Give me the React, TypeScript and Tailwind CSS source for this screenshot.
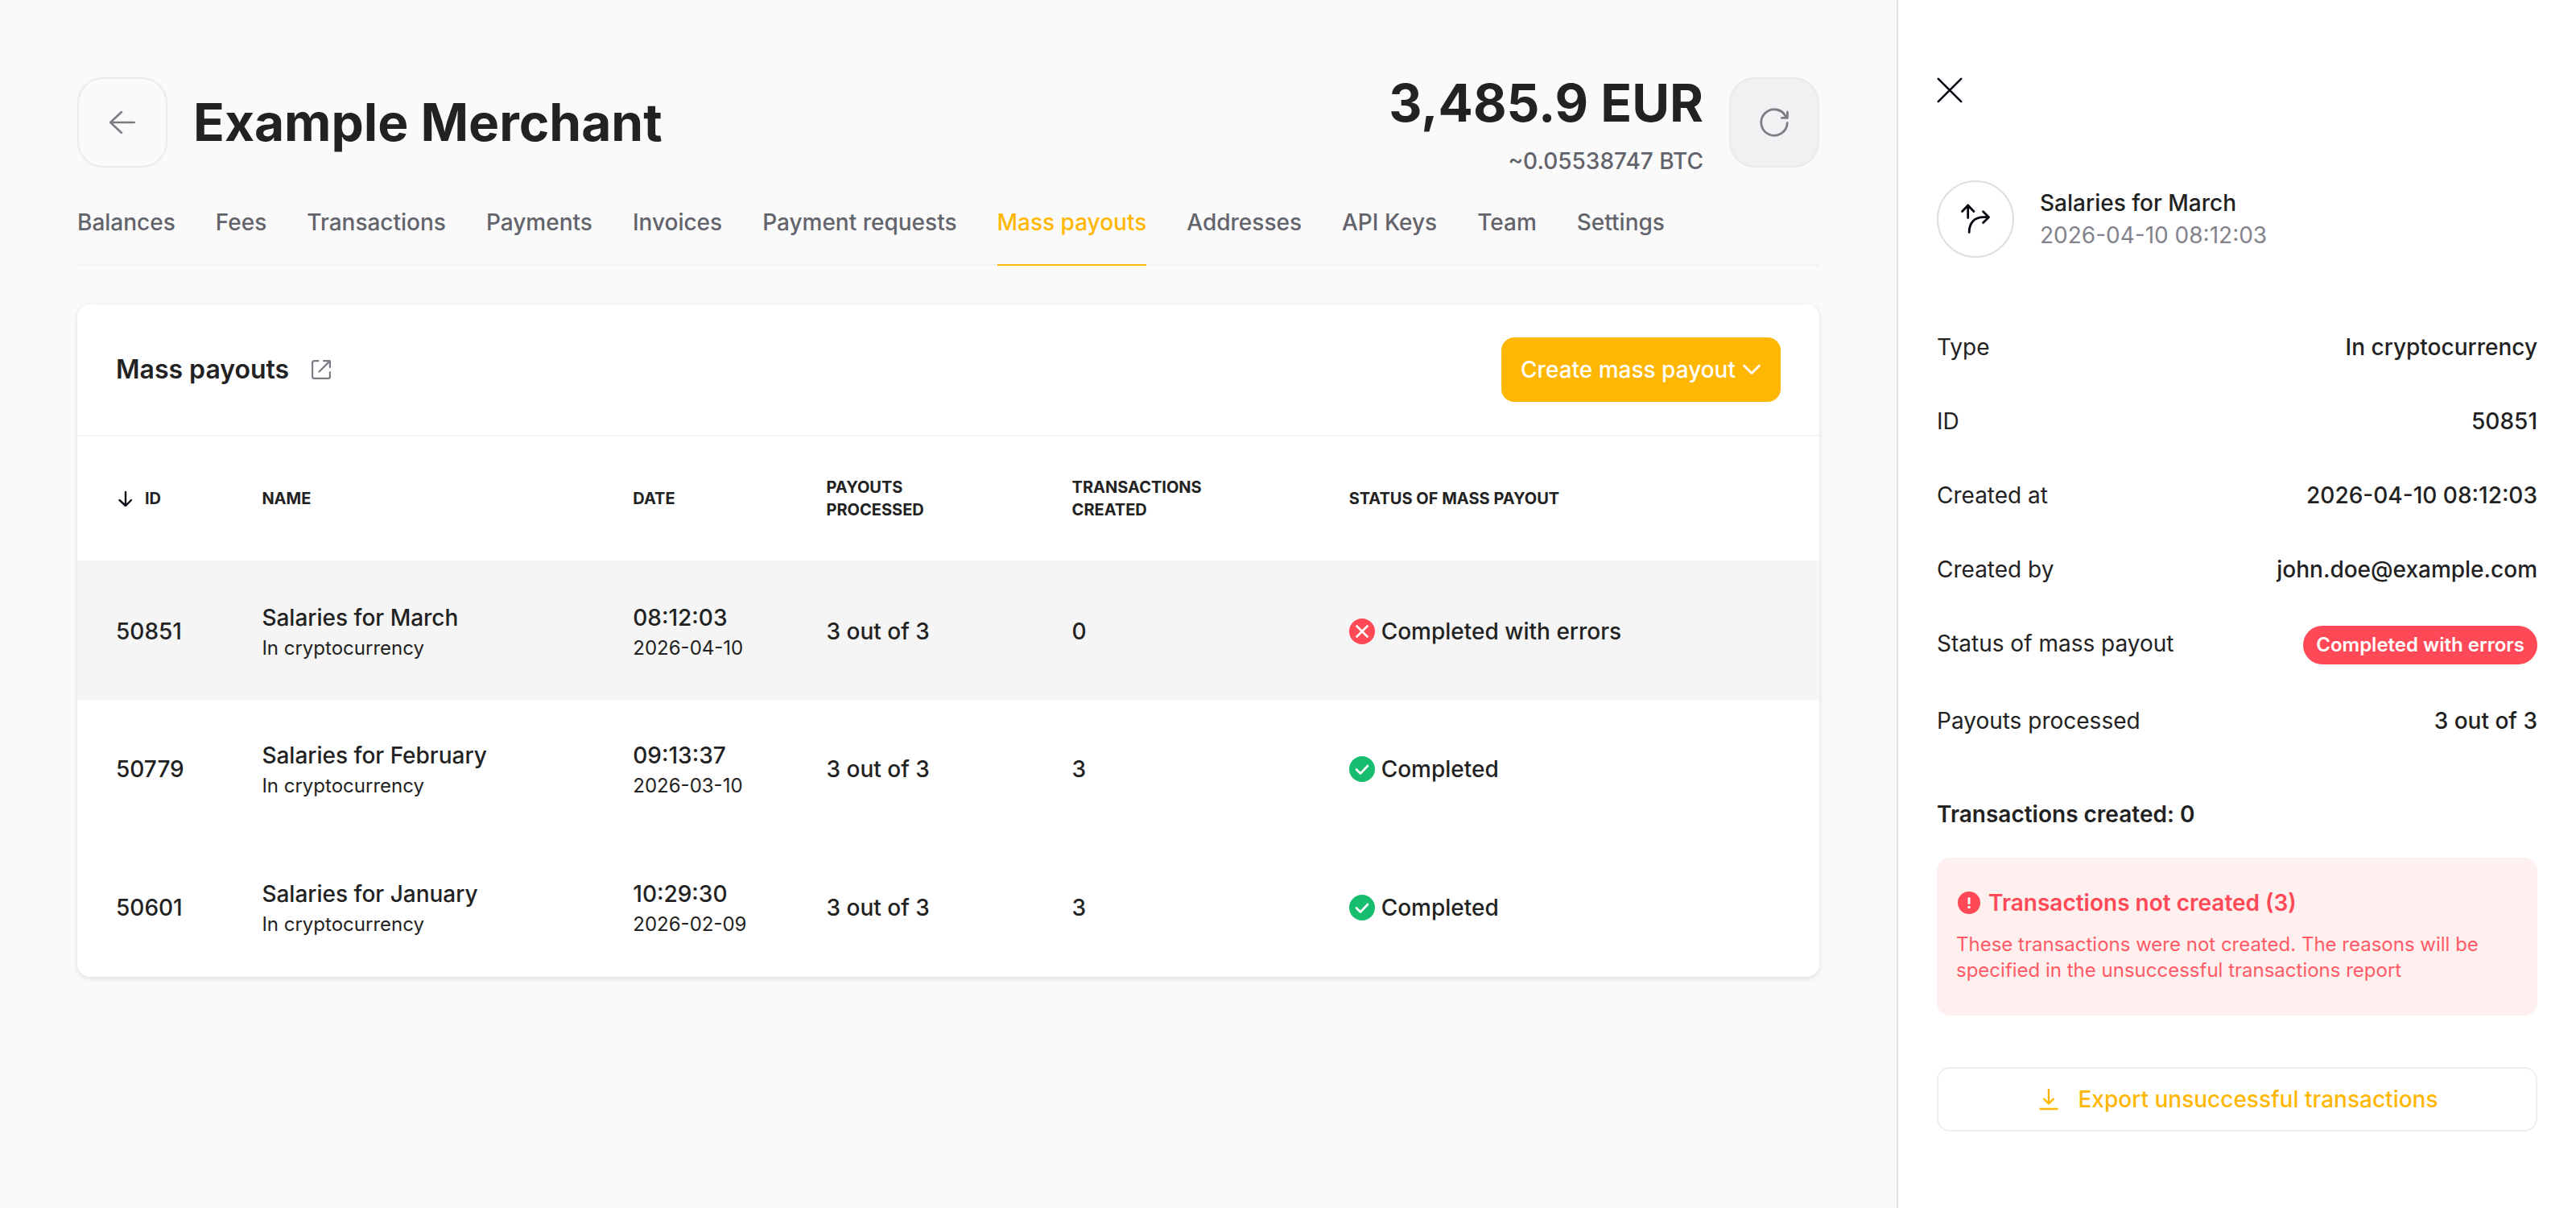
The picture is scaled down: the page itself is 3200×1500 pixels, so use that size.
import type { ReactNode } from "react";

const tabs = [
  "Balances",
  "Fees",
  "Transactions",
  "Payments",
  "Invoices",
  "Payment requests",
  "Mass payouts",
  "Addresses",
  "API Keys",
  "Team",
  "Settings",
];

const payouts = [
  { id: "50851", name: "Salaries for March", time: "08:12:03", date: "2026-04-10", created: 0, ok: false },
  { id: "50779", name: "Salaries for February", time: "09:13:37", date: "2026-03-10", created: 3, ok: true },
  { id: "50601", name: "Salaries for January", time: "10:29:30", date: "2026-02-09", created: 3, ok: true },
];

function StatusIcon({ ok }: { ok: boolean }) {
  return (
    <svg viewBox="0 0 32 32" className="size-8 shrink-0" fill="none" stroke="#fff" strokeWidth="2.6" strokeLinecap="round" strokeLinejoin="round">
      <circle cx="16" cy="16" r="16" stroke="none" fill={ok ? "#16bd6e" : "#ff4956"} />
      {ok ? <path d="M9 16.500L14 21.500L23 12" /> : <path d="M9.500 9.500L22.500 22.500M22.500 9.500L9.500 22.500" />}
    </svg>
  );
}

function DetailRow({ label, children }: { label: string; children: ReactNode }) {
  return (
    <div className="flex items-start justify-between gap-4">
      <dt className="leading-[44px]">{label}</dt>
      <dd className="font-medium leading-[44px]">{children}</dd>
    </div>
  );
}

function Header() {
  return (
    <header className="flex items-start justify-between gap-8">
      <div className="flex items-start gap-8">
        <button
          aria-label="Back"
          className="flex size-28 items-center justify-center rounded-[32px] border-2 border-[#eaeaea]"
        >
          <svg viewBox="0 0 32 28" className="h-7 w-8" fill="none" stroke="#7c7c85" strokeWidth="2.6" strokeLinecap="round" strokeLinejoin="round">
            <path d="M30.8 14H1.2M15 1L1.2 14L15 27" />
          </svg>
        </button>
        <h1 className="text-[64px] font-bold leading-[112px]">Example Merchant</h1>
      </div>
      <div className="flex items-start gap-8">
        <div className="text-right">
          <div className="text-[64px] font-bold leading-[64px]">3,485.9 EUR</div>
          <div className="mt-5 text-[28px] font-medium leading-10 text-[#63636b]">~0.05538747 BTC</div>
        </div>
        <button
          aria-label="Refresh"
          className="flex size-28 items-center justify-center rounded-[32px] border-2 border-[#eaeaea] bg-[#f1f1f3]"
        >
          <svg viewBox="0 0 36 36" className="size-9" fill="none" stroke="#7c7c85" strokeWidth="2.8" strokeLinecap="round" strokeLinejoin="round">
            <path d="M34.200 18.600A16.200 16.200 0 1 1 32.500 10.800M34.400 5.200V12.400H27.400" />
          </svg>
        </button>
      </div>
    </header>
  );
}

function PayoutsTable() {
  return (
    <table className="w-full table-fixed text-left text-[28px] leading-[42px]">
      <colgroup>
        <col className="w-[10.6%]" />
        <col className="w-[21.3%]" />
        <col className="w-[11.1%]" />
        <col className="w-[14.1%]" />
        <col className="w-[15.9%]" />
        <col />
      </colgroup>
      <thead>
        <tr className="h-39 border-y-2 border-[#f5f5f5] text-xl leading-7 uppercase">
          <th className="pl-12">
            <button className="flex items-center gap-4 uppercase">
              <svg viewBox="0 0 20 20" className="size-5" fill="none" stroke="#101018" strokeWidth="2.4" strokeLinecap="round" strokeLinejoin="round">
                <path d="M12 2V19M4.500 12L12 19L19 12" />
              </svg>
              ID
            </button>
          </th>
          <th>Name</th>
          <th>Date</th>
          <th>
            Payouts
            <br />
            processed
          </th>
          <th>
            Transactions
            <br />
            created
          </th>
          <th>Status of mass payout</th>
        </tr>
      </thead>
      <tbody>
        {payouts.map((p) => (
          <tr key={p.id} className={p.ok ? "h-[172px]" : "h-[172px] bg-[#f5f5f5]"}>
            <td className="pl-12 font-medium">{p.id}</td>
            <td>
              <div className="font-medium">{p.name}</div>
              <div className="text-2xl leading-[34px]">In cryptocurrency</div>
            </td>
            <td>
              <div className="font-medium">{p.time}</div>
              <div className="text-2xl leading-[34px]">{p.date}</div>
            </td>
            <td className="font-medium">3 out of 3</td>
            <td className="font-medium">{p.created}</td>
            <td className="font-medium">
              <div className="flex items-center gap-2">
                <StatusIcon ok={p.ok} />
                {p.ok ? "Completed" : "Completed with errors"}
              </div>
            </td>
          </tr>
        ))}
      </tbody>
    </table>
  );
}

function DetailsPanel() {
  return (
    <aside className="w-[844px] shrink-0 border-l-2 border-[#e2e2e2] bg-white px-12 py-24 text-[28px]">
      <button aria-label="Close" className="block">
        <svg viewBox="0 0 32 32" className="size-8" fill="none" stroke="#05050f" strokeWidth="2.6" strokeLinecap="round">
          <path d="M1.800 1.800L30.200 30.200M30.200 1.800L1.800 30.200" />
        </svg>
      </button>

      <div className="mt-24 flex items-center gap-8">
        <div className="flex size-24 items-center justify-center rounded-full border-2 border-[#dedede]">
          <svg viewBox="0 0 48 48" className="size-12" fill="none" stroke="#05050f" strokeWidth="2.8" strokeLinecap="round" strokeLinejoin="round">
            <path d="M14.700 22.500V7M7.500 14.500L14.700 7L21.900 14.500M16.200 40.500C16.200 29 22.500 21.700 34 21.700H40.500M33.600 14.700L40.500 21.700L33.600 28.500" />
          </svg>
        </div>
        <div className="leading-10">
          <div className="font-medium">Salaries for March</div>
          <div className="text-[#83838b]">2026-04-10 08:12:03</div>
        </div>
      </div>

      <dl className="mt-[89px] flex flex-col gap-12">
        <DetailRow label="Type">In cryptocurrency</DetailRow>
        <DetailRow label="ID">50851</DetailRow>
        <DetailRow label="Created at">2026-04-10 08:12:03</DetailRow>
        <DetailRow label="Created by">john.doe@example.com</DetailRow>
        <DetailRow label="Status of mass payout">
          <span className="block rounded-full bg-[#ff4956] px-4 text-2xl font-semibold leading-[48px] text-white">
            Completed with errors
          </span>
        </DetailRow>
        <DetailRow label="Payouts processed">3 out of 3</DetailRow>
      </dl>

      <h3 className="mt-18 font-semibold leading-[44px]">Transactions created: 0</h3>

      <div className="mt-8 rounded-2xl bg-[#fff0f0] px-6 pt-8 pb-10 text-[#ff4956]">
        <div className="flex items-center gap-2 font-semibold leading-[48px]">
          <svg viewBox="0 0 32 32" className="size-8">
            <circle cx="16" cy="16" r="14" fill="#ff4956" />
            <rect x="14.500" y="9" width="3" height="9" rx="1.500" fill="#fff" />
            <circle cx="16" cy="21.500" r="1.800" fill="#fff" />
          </svg>
          Transactions not created (3)
        </div>
        <p className="mt-3 text-2xl leading-8 text-[#ff5a66]">
          These transactions were not created. The reasons will be specified in the unsuccessful transactions report
        </p>
      </div>

      <button className="mt-16 flex h-20 w-full items-center justify-center gap-5 rounded-2xl border-2 border-[#eee] font-medium text-[#ffb703]">
        <svg viewBox="0 0 32 32" className="size-8" fill="none" stroke="currentColor" strokeWidth="2.4" strokeLinejoin="round">
          <path d="M16 3V21M9.500 15L16 21.500L22.500 15M4.500 28H27.500" />
        </svg>
        Export unsuccessful transactions
      </button>
    </aside>
  );
}

export default function App() {
  return (
    <div className="flex min-h-screen bg-[#fafafa] font-[Inter,sans-serif] text-[#222]">
      <main className="min-w-0 grow p-24">
        <Header />

        <nav className="mt-5 flex gap-[50px] border-b-2 border-[#f2f2f2] text-[28px] font-medium leading-10 text-[#63636b]">
          {tabs.map((tab) => (
            <a
              key={tab}
              href="#"
              className={
                tab === "Mass payouts"
                  ? "-mb-0.5 border-b-2 border-[#ffb703] pt-4 pb-8 text-[#ffb703]"
                  : "pt-4 pb-8"
              }
            >
              {tab}
            </a>
          ))}
        </nav>

        <section className="mt-12 overflow-hidden rounded-2xl bg-white shadow-[0_2px_6px_rgba(0,0,0,0.12)]">
          <div className="flex items-center justify-between px-12 py-[41px]">
            <div className="flex items-center gap-7">
              <h2 className="text-[32px] font-semibold leading-10">Mass payouts</h2>
              <a href="#" aria-label="Open docs">
                <svg viewBox="0 0 24 24" className="size-6" fill="none" stroke="#7c7c85" strokeWidth="2.2" strokeLinecap="round" strokeLinejoin="round">
                  <path d="M8.500 1.100H3.500A2.400 2.400 0 0 0 1.100 3.500V20.500A2.400 2.400 0 0 0 3.500 22.900H20.500A2.400 2.400 0 0 0 22.900 20.500V15M15 1.100H22.900V9M22.900 1.100L9.500 14.500" />
                </svg>
              </a>
            </div>
            <button className="flex h-20 items-center gap-2 rounded-2xl bg-[#ffb703] px-6 text-[28px] font-medium text-white">
              Create mass payout
              <svg viewBox="0 0 24 24" className="size-6" fill="none" stroke="currentColor" strokeWidth="2.8" strokeLinecap="round" strokeLinejoin="round">
                <path d="M2.500 7L12 16.500L21.500 7" />
              </svg>
            </button>
          </div>
          <PayoutsTable />
        </section>
      </main>

      <DetailsPanel />
    </div>
  );
}
